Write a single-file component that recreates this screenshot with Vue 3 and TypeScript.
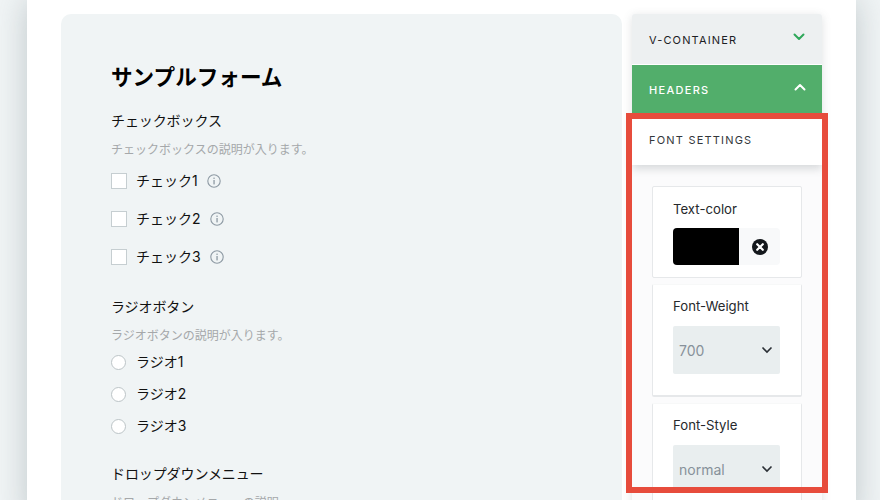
<script setup lang="ts">
const checks = ['チェック1', 'チェック2', 'チェック3']
const radios = ['ラジオ1', 'ラジオ2', 'ラジオ3']
</script>

<template>
  <div class="stage">
    <div class="page">
      <main class="panel">
        <h1>サンプルフォーム</h1>
        <section class="group checks">
          <h2>チェックボックス</h2>
          <p class="desc">チェックボックスの説明が入ります。</p>
          <label v-for="c in checks" :key="c" class="row check-row">
            <span class="box"></span>
            <span class="lbl">{{ c }}</span>
            <svg class="info" width="14" height="14" viewBox="0 0 14 14" fill="none">
              <circle cx="7" cy="7" r="6.2" stroke="#8d99a3" stroke-width="1.1" />
              <rect x="6.4" y="6" width="1.3" height="4.4" fill="#8d99a3" />
              <rect x="6.4" y="3.6" width="1.3" height="1.3" fill="#8d99a3" />
            </svg>
          </label>
        </section>
        <section class="group radios">
          <h2>ラジオボタン</h2>
          <p class="desc">ラジオボタンの説明が入ります。</p>
          <label v-for="r in radios" :key="r" class="row radio-row">
            <span class="circle"></span>
            <span class="lbl">{{ r }}</span>
          </label>
        </section>
        <section class="group drop">
          <h2>ドロップダウンメニュー</h2>
          <p class="desc">ドロップダウンメニューの説明</p>
        </section>
      </main>

      <aside class="side">
        <div class="acc acc-grey">
          <span>V-CONTAINER</span>
          <svg class="chev" width="12" height="8" viewBox="0 0 12 8" fill="none">
            <path d="M1.5 1.5 6 6l4.5-4.5" stroke="#2fa85a" stroke-width="2" stroke-linecap="round" stroke-linejoin="round" />
          </svg>
        </div>
        <div class="acc acc-green">
          <span>HEADERS</span>
          <svg class="chev" width="12" height="8" viewBox="0 0 12 8" fill="none">
            <path d="M1.5 6.5 6 2l4.5 4.5" stroke="#fff" stroke-width="2" stroke-linecap="round" stroke-linejoin="round" />
          </svg>
        </div>
        <div class="acc acc-white"><span>FONT SETTINGS</span></div>
        <div class="cards">
          <div class="card card-color">
            <div class="card-label">Text-color</div>
            <div class="color-field">
              <span class="swatch"></span>
              <span class="clear">
                <svg width="16" height="16" viewBox="0 0 16 16">
                  <circle cx="8" cy="8" r="8" fill="#14181c" />
                  <path d="M5.2 5.2l5.6 5.6M10.8 5.2l-5.6 5.6" stroke="#fff" stroke-width="2.2" stroke-linecap="round" />
                </svg>
              </span>
            </div>
          </div>
          <div class="card card-select">
            <div class="card-label">Font-Weight</div>
            <div class="select">
              <span>700</span>
              <svg width="12" height="8" viewBox="0 0 12 8" fill="none">
                <path d="M1.5 1.5 6 6l4.5-4.5" stroke="#2b3036" stroke-width="1.6" />
              </svg>
            </div>
          </div>
          <div class="card card-select">
            <div class="card-label">Font-Style</div>
            <div class="select">
              <span>normal</span>
              <svg width="12" height="8" viewBox="0 0 12 8" fill="none">
                <path d="M1.5 1.5 6 6l4.5-4.5" stroke="#2b3036" stroke-width="1.6" />
              </svg>
            </div>
          </div>
        </div>
      </aside>
      <div class="highlight"></div>
    </div>
  </div>
</template>

<style>
html, body { margin: 0; padding: 0; background: #f0f4f5; overflow: hidden; }
</style>

<style scoped>
.stage {
  width: 880px;
  height: 500px;
  overflow: hidden;
  position: relative;
  background: #f0f4f5;
  font-family: Inter, "Noto Sans CJK JP", sans-serif;
}
.page {
  position: relative;
  width: 829px;
  height: 520px;
  margin-left: 27px;
  background: #fff;
  box-shadow: 0 0 30px rgba(120, 135, 140, 0.4);
  display: flex;
  align-items: flex-start;
  padding: 14px 0 0 34px;
  box-sizing: border-box;
  gap: 10px;
}
.panel {
  width: 561px;
  height: 520px;
  flex: none;
  background: #f0f4f5;
  border-radius: 10px 10px 0 0;
  padding: 48px 0 0 50px;
  box-sizing: border-box;
  color: #0c0c0c;
}
h1 {
  margin: 0;
  font-size: 21.6px;
  line-height: 30px;
  font-weight: 700;
  color: #000;
}
h2 {
  margin: 0;
  font-size: 14px;
  line-height: 20px;
  font-weight: 400;
  letter-spacing: -0.1px;
  color: #111;
}
.group.checks { margin-top: 19px; }
.group.radios { margin-top: 21px; }
.group.drop { margin-top: 22px; }
.desc {
  margin: 10px 0 0;
  font-size: 12px;
  line-height: 18px;
  color: #a5a8aa;
}
.row {
  display: flex;
  align-items: center;
  font-size: 14px;
  font-weight: 400;
  color: #111;
}
.lbl { padding-bottom: 2px; }
.check-row { height: 38px; }
.checks .desc { margin-bottom: 3px; }
.radio-row { height: 32px; }
.radios .desc { margin-bottom: 1px; }
.box {
  width: 14px;
  height: 14px;
  background: #fff;
  border: 1px solid #c6ced1;
  flex: none;
}
.circle {
  width: 13px;
  height: 13px;
  background: #fff;
  border: 1px solid #bcc4c7;
  border-radius: 50%;
  flex: none;
}
.check-row .lbl { margin-left: 9px; }
.radio-row .lbl { margin-left: 10px; }
.info { margin-left: 9px; flex: none; }
.side {
  width: 190px;
  flex: none;
  background: #fbfbfc;
  box-shadow: 0 2px 10px rgba(80, 90, 95, 0.18);
  border-radius: 3px 3px 0 0;
}
.acc {
  display: flex;
  justify-content: space-between;
  align-items: center;
  box-sizing: border-box;
  padding: 0 17px;
  font-size: 11px;
  font-weight: 400;
  letter-spacing: 1.15px;
}
.acc-grey {
  height: 51px;
  padding-top: 1px;
  background: #edf0f1;
  color: #1c2024;
  border-radius: 3px 3px 0 0;
  border-bottom: 1px solid #fff;
}
.acc-green {
  height: 50px;
  padding-bottom: 1px;
  background: #52ae6b;
  color: #fff;
  font-weight: 500;
  letter-spacing: 1.3px;
}
.acc-green .chev { margin-right: -1px; }
.acc-white {
  height: 50px;
  background: #fff;
  color: #33373b;
  letter-spacing: 1.2px;
  box-shadow: 0 4px 8px rgba(80, 90, 95, 0.2);
  position: relative;
}
.chev { margin-top: -6px; }
.cards {
  padding: 21px 20px 0;
  display: flex;
  flex-direction: column;
  gap: 6px;
}
.card {
  background: #fff;
  border: 1px solid #e6e8ea;
  border-radius: 2px;
  box-sizing: border-box;
  padding: 14px 20px 0;
  font-size: 13.2px;
  color: #26292c;
}
.card-color { height: 92px; }
.card-select {
  height: 113px;
  padding-top: 13px;
  border-top-color: #f7f8f8;
  border-bottom-width: 2px;
}
.card-label { line-height: 16px; }
.color-field {
  display: flex;
  margin-top: 11px;
  width: 107px;
  height: 37px;
  background: #f8f9fa;
  border-radius: 4px;
}
.swatch {
  width: 66px;
  height: 37px;
  background: #000;
  border-radius: 4px 0 0 4px;
}
.clear {
  flex: 1;
  display: flex;
  align-items: center;
  justify-content: center;
}
.select {
  display: flex;
  justify-content: space-between;
  align-items: center;
  margin-top: 12px;
  width: 107px;
  height: 48px;
  box-sizing: border-box;
  padding: 0 7px 0 6px;
  background: #e9eeef;
  border-radius: 2px;
  color: #87919a;
  font-size: 14px;
}
.highlight {
  position: absolute;
  left: 599px;
  top: 113px;
  width: 202px;
  height: 380px;
  box-sizing: border-box;
  border: 6px solid #e74c3c;
  pointer-events: none;
}
</style>
